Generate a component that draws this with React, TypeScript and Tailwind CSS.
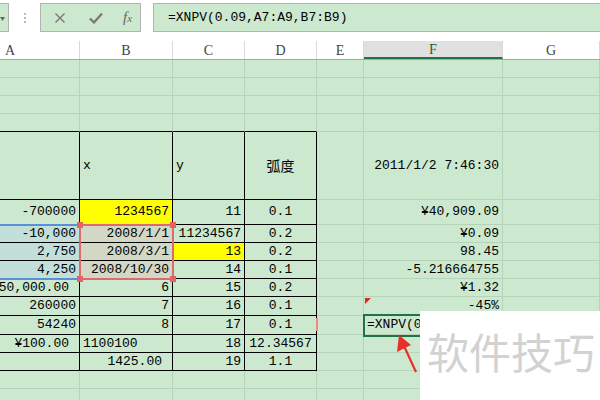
import React from 'react';

type Cell = {
    t?: string;
    a?: 'l' | 'r' | 'c';
    bg?: string;
    pad?: string;
    tb?: boolean;
    bb?: boolean;
};

const widths = ['w-[80px]', 'w-[93px]', 'w-[72px]', 'w-[72px]', 'w-[47px]', 'w-[139px]', 'w-[97px]'];
const heads = ['A', 'B', 'C', 'D', 'E', 'F', 'G'];

const YELLOW = 'bg-[#ffff00]';
const BLUE_TINT = 'bg-[#c3dfd9]';
const RED_TINT = 'bg-[#d3d8c6]';

// one entry per sheet row: height class + 7 cells
const rows: { h: string; cells: Cell[] }[] = [
    { h: 'h-[18px]', cells: [{}, {}, {}, {}, {}, {}, {}] },
    { h: 'h-[18px]', cells: [{}, {}, {}, {}, {}, {}, {}] },
    { h: 'h-[18px]', cells: [{}, {}, {}, {}, {}, {}, {}] },
    { h: 'h-[18px]', cells: [{ bb: true }, { bb: true }, { bb: true }, { bb: true }, {}, {}, {}] },
    {
        h: 'h-[68px]',
        cells: [
            { tb: true },
            { t: 'x', a: 'l', tb: true },
            { t: 'y', a: 'l', tb: true },
            { t: '弧度', a: 'c', tb: true },
            {},
            { t: '2011/1/2 7:46:30', a: 'r' },
            {},
        ],
    },
    {
        h: 'h-[25px]',
        cells: [
            { t: '-700000', a: 'r', tb: true },
            { t: '1234567', a: 'r', tb: true, bg: YELLOW },
            { t: '11', a: 'r', tb: true },
            { t: '0.1', a: 'c', tb: true },
            {},
            { t: '¥40,909.09', a: 'r' },
            {},
        ],
    },
    {
        h: 'h-[18px]',
        cells: [
            { t: '-10,000', a: 'r', tb: true, bg: BLUE_TINT },
            { t: '2008/1/1', a: 'r', tb: true, bg: RED_TINT },
            { t: '11234567', a: 'r', tb: true },
            { t: '0.2', a: 'c', tb: true },
            {},
            { t: '¥0.09', a: 'r' },
            {},
        ],
    },
    {
        h: 'h-[18px]',
        cells: [
            { t: '2,750', a: 'r', tb: true, bg: BLUE_TINT },
            { t: '2008/3/1', a: 'r', tb: true, bg: RED_TINT },
            { t: '13', a: 'r', tb: true, bg: YELLOW },
            { t: '0.2', a: 'c', tb: true },
            {},
            { t: '98.45', a: 'r' },
            {},
        ],
    },
    {
        h: 'h-[18px]',
        cells: [
            { t: '4,250', a: 'r', tb: true, bg: BLUE_TINT },
            { t: '2008/10/30', a: 'r', tb: true, bg: RED_TINT },
            { t: '14', a: 'r', tb: true },
            { t: '0.1', a: 'c', tb: true },
            {},
            { t: '-5.216664755', a: 'r' },
            {},
        ],
    },
    {
        h: 'h-[18px]',
        cells: [
            { t: '¥150,000.00', a: 'r', tb: true, pad: 'pr-[10px]' },
            { t: '6', a: 'r', tb: true },
            { t: '15', a: 'r', tb: true },
            { t: '0.2', a: 'c', tb: true },
            {},
            { t: '¥1.32', a: 'r' },
            {},
        ],
    },
    {
        h: 'h-[19px]',
        cells: [
            { t: '260000', a: 'r', tb: true },
            { t: '7', a: 'r', tb: true },
            { t: '16', a: 'r', tb: true },
            { t: '0.1', a: 'c', tb: true },
            {},
            { t: '-45%', a: 'r' },
            {},
        ],
    },
    {
        h: 'h-[19px]',
        cells: [
            { t: '54240', a: 'r', tb: true },
            { t: '8', a: 'r', tb: true },
            { t: '17', a: 'r', tb: true },
            { t: '0.1', a: 'c', tb: true },
            {},
            { t: '=XNPV(0.09,A7:A9,B7:B9)', a: 'l' },
            {},
        ],
    },
    {
        h: 'h-[18px]',
        cells: [
            { t: '¥100.00', a: 'r', tb: true, pad: 'pr-[10px]' },
            { t: '1100100', a: 'l', tb: true },
            { t: '18', a: 'r', tb: true },
            { t: '12.34567', a: 'c', tb: true },
            {},
            {},
            {},
        ],
    },
    {
        h: 'h-[18px]',
        cells: [
            { tb: true },
            { t: '1425.00', a: 'r', tb: true, pad: 'pr-[10px]' },
            { t: '19', a: 'r', tb: true },
            { t: '1.1', a: 'c', tb: true },
            {},
            {},
            {},
        ],
    },
    { h: 'h-[18px]', cells: [{}, {}, {}, {}, {}, {}, {}] },
    { h: 'h-[18px]', cells: [{}, {}, {}, {}, {}, {}, {}] },
];

function SheetCell({ c, w }: { c: Cell; w: string }) {
    const align = c.a === 'l' ? 'justify-start pl-[3px]' : c.a === 'c' ? 'justify-center' : 'justify-end';
    const pad = c.pad ?? (c.a === 'r' ? 'pr-[3px]' : '');
    const rb = c.tb ? 'border-r-black' : 'border-r-[#b7d4ba]';
    const bb = c.tb || c.bb ? 'border-b-black' : 'border-b-[#b7d4ba]';
    return (
        <div className={`${w} ${c.bg ?? ''} ${rb} ${bb} ${align} ${pad} shrink-0 h-full flex items-center overflow-hidden whitespace-nowrap border-r border-b`}>
            {c.t && <span className={c.t === '弧度' ? "font-['Noto_Sans_CJK_SC',sans-serif] text-[14px]" : ''}>{c.t}</span>}
        </div>
    );
}

export default function App() {
    return (
        <div className="relative w-[600px] h-[400px] overflow-hidden bg-[#cce8cf] font-['Liberation_Mono',monospace] text-[13px] text-black">
            {/* toolbar */}
            <div className="h-[41px] bg-white flex items-start pt-[3px]">
                <div className="w-[9px] h-[29px] border border-l-0 border-[#b3b3b3] bg-[#cce8cf] flex items-center">
                    <svg width="5" height="4" viewBox="0 0 5 4" className="ml-[0px] mt-[3px]">
                        <path d="M0 0 L5 0 L2.5 4 Z" fill="#666" />
                    </svg>
                </div>
                <div className="w-[31px] h-[29px] flex flex-col items-center justify-center gap-[2px] pt-[1px]">
                    <span className="w-[2px] h-[2px] bg-[#bbb]" />
                    <span className="w-[2px] h-[2px] bg-[#bbb]" />
                    <span className="w-[2px] h-[2px] bg-[#bbb]" />
                </div>
                <div className="w-[101px] h-[29px] border border-[#b3b3b3] bg-[#cce8cf] flex items-center">
                    <svg width="12" height="12" viewBox="0 0 12 12" className="ml-[13px]">
                        <path d="M1.5 1.5 L10.5 10.5 M10.5 1.5 L1.5 10.5" stroke="#777" strokeWidth="1.4" />
                    </svg>
                    <svg width="14" height="12" viewBox="0 0 14 12" className="ml-[23px]">
                        <path d="M1 6.5 L5 10.5 L13 1.5" stroke="#777" strokeWidth="2.2" fill="none" />
                    </svg>
                    <span className="ml-[20px] font-['Liberation_Serif',serif] italic text-[15px] text-[#666] leading-none">
                        f<span className="text-[11px]">x</span>
                    </span>
                </div>
                <div className="ml-[12px] flex-1 h-[29px] border border-r-0 border-[#b3b3b3] bg-[#cce8cf] flex items-center pl-[14px] text-[13px]">
                    =XNPV(0.09,A7:A9,B7:B9)
                </div>
            </div>

            {/* column headers */}
            <div className="h-[19px] flex bg-white border-b border-[#a6a6a6] font-['Liberation_Serif',serif] text-[14px] text-[#444]">
                {heads.map((h, i) => (
                    <div
                        key={h}
                        className={`${widths[i]} shrink-0 h-full flex items-center border-r border-[#d9d9d9] ${
                            i === 0 ? 'justify-start pl-[5px]' : 'justify-center'
                        } ${i === 5 ? 'bg-[#e0e0e0] border-b-2 border-b-[#217346] text-[#1e5c36]' : ''}`}
                    >
                        {h}
                    </div>
                ))}
            </div>

            {/* sheet body */}
            {rows.map((r, ri) => (
                <div key={ri} className={`${r.h} flex`}>
                    {r.cells.map((c, ci) => (
                        <SheetCell key={ci} c={c} w={widths[ci]} />
                    ))}
                </div>
            ))}

            {/* range highlights */}
            <div className="absolute left-[-3px] top-[224px] w-[84px] h-[56px] border-2 border-[#5b8fd6]" />
            <div className="absolute left-[79px] top-[224px] w-[95px] h-[56px] border-2 border-[#dd6b6b]" />
            <div className="absolute left-[77px] top-[222px] w-[6px] h-[6px] bg-[#e06464]" />
            <div className="absolute left-[170px] top-[222px] w-[6px] h-[6px] bg-[#e06464]" />
            <div className="absolute left-[77px] top-[276px] w-[6px] h-[6px] bg-[#e06464]" />
            <div className="absolute left-[170px] top-[276px] w-[6px] h-[6px] bg-[#e06464]" />

            {/* active cell */}
            <div className="absolute left-[363px] top-[314px] w-[80px] h-[23px] border-2 border-[#217346]" />
            <svg width="6" height="6" viewBox="0 0 6 6" className="absolute left-[365px] top-[298px]">
                <path d="M0 0 L6 0 L0 6 Z" fill="#e52020" />
            </svg>
            <div className="absolute left-[316px] top-[318px] w-[2px] h-[13px] bg-[#f08a7e]" />

            {/* watermark */}
            <div className="absolute left-[420px] top-[311px] w-[180px] h-[89px] bg-white pl-[7px] pt-[19px] font-['Noto_Sans_CJK_SC',sans-serif] text-[42px] leading-none text-[#d2d2d2] whitespace-nowrap">
                软件技巧
            </div>

            {/* arrow */}
            <svg width="30" height="45" viewBox="0 0 30 45" className="absolute left-[390px] top-[330px]">
                <path d="M14 16 L26 42" stroke="#e8302a" strokeWidth="2.2" />
                <path d="M9 5 L7 22 L21 15 Z" fill="#e8302a" />
            </svg>
        </div>
    );
}
